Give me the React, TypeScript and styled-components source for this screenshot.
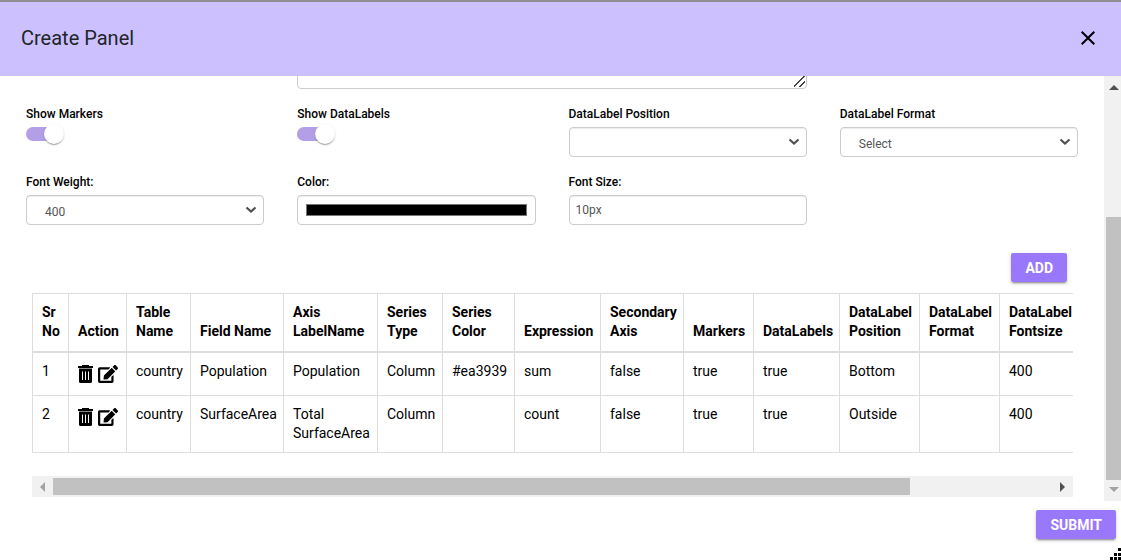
import React, { useState } from "react";
import styled, { createGlobalStyle } from "styled-components";

const GlobalStyle = createGlobalStyle`
  *, *::before, *::after { box-sizing: border-box; }
  body {
    margin: 0;
    background: #fff;
    color: #000;
    font-family: Roboto, "Liberation Sans", sans-serif;
    font-size: 14px;
  }
  button, input, select, textarea { font-family: inherit; }
`;

const Dialog = styled.section`
  border-top: 2px solid #8f8f8f;
`;

const Header = styled.header`
  display: flex;
  align-items: center;
  justify-content: space-between;
  height: 74px;
  padding: 0 21px 2px;
  background: #ccc0ff;
`;

const Title = styled.h1`
  margin: 0;
  font-size: 20px;
  font-weight: 400;
  line-height: 24px;
  color: #212529;
`;

const CloseButton = styled.button`
  display: flex;
  padding: 0;
  border: 0;
  background: none;
  color: #000;
  cursor: pointer;
`;

const Body = styled.div`
  display: flex;
`;

const Content = styled.main`
  flex: 1;
  min-width: 0;
  overflow: hidden;
  padding-bottom: 4px;
`;

const FormGrid = styled.form`
  display: grid;
  grid-template-columns: repeat(4, 1fr);
  gap: 16px 33px;
  margin-top: -47px;
  padding: 0 26px;
`;

const Field = styled.div`
  display: flex;
  flex-direction: column;
  align-items: flex-start;
  gap: 4px;
`;

const Label = styled.label`
  font-size: 12px;
  font-weight: 500;
  line-height: 18px;
`;

const Notes = styled.textarea`
  grid-column: 2 / span 2;
  display: block;
  width: 100%;
  height: 60px;
  border: 1px solid #ccc;
  border-radius: 4px;
  box-shadow: inset 0 1px 1px rgba(0, 0, 0, 0.075);
  resize: both;

  &::-webkit-resizer {
    background: linear-gradient(
        135deg,
        transparent 45%,
        #444 45%,
        #444 54%,
        transparent 54%,
        transparent 71%,
        #444 71%,
        #444 80%,
        transparent 80%
      )
      right 1px bottom 1px / 11px 11px no-repeat;
  }
`;

const Toggle = styled.input`
  appearance: none;
  display: flex;
  align-items: center;
  width: 36px;
  height: 14px;
  margin: 0;
  border-radius: 7px;
  background: #c4c4c4;
  cursor: pointer;

  &::before {
    content: "";
    flex: none;
    width: 20px;
    height: 20px;
    border-radius: 50%;
    background: #fff;
    box-shadow: 0 2px 1px -1px rgba(0, 0, 0, 0.2), 0 1px 1px rgba(0, 0, 0, 0.14),
      0 1px 3px rgba(0, 0, 0, 0.12);
  }

  &:checked { background: #b39fe6; }
  &:checked::before { margin-left: 18px; }
`;

const SelectBox = styled.div`
  display: grid;
  width: 100%;
  align-items: center;

  > * { grid-area: 1 / 1; }
  > svg {
    justify-self: end;
    margin-right: 7px;
    pointer-events: none;
  }
`;

const Select = styled.select`
  appearance: none;
  width: 100%;
  height: 30px;
  padding: 4px 24px 0 18px;
  border: 1px solid #ccc;
  border-radius: 4px;
  background: #fff;
  box-shadow: inset 0 1px 1px rgba(0, 0, 0, 0.075);
  color: #555;
  font-size: 12px;
`;

const TextInput = styled.input`
  width: 100%;
  height: 30px;
  padding: 0 6px;
  border: 1px solid #ccc;
  border-radius: 4px;
  background: #fff;
  box-shadow: inset 0 1px 1px rgba(0, 0, 0, 0.075);
  color: #555;
  font-size: 12px;
`;

const ColorInput = styled(TextInput)`
  padding: 8px;

  &::-webkit-color-swatch-wrapper { padding: 0; }
  &::-webkit-color-swatch {
    border: 1px solid #767676;
    border-radius: 0;
  }
`;

const Actions = styled.div`
  display: flex;
  justify-content: flex-end;
  padding: 28px 37px 11px;
`;

const RaisedButton = styled.button`
  height: 29px;
  padding: 0 14px;
  border: 0;
  border-radius: 2px;
  background: #9a78fb;
  box-shadow: 0 3px 1px -2px rgba(0, 0, 0, 0.2), 0 2px 2px rgba(0, 0, 0, 0.14),
    0 1px 5px rgba(0, 0, 0, 0.12);
  color: #fff;
  font-size: 14px;
  font-weight: 700;
  cursor: pointer;
`;

const TablePane = styled.div`
  margin: 0 31px 0 32px;
`;

const TableViewport = styled.div`
  overflow: hidden;
  padding-bottom: 23px;
`;

const Table = styled.table`
  table-layout: fixed;
  width: 1210px;
  border-top: 1px solid #ddd;
  border-left: 1px solid #ddd;
  border-collapse: separate;
  border-spacing: 0;
  line-height: 19px;
`;

const HeadCell = styled.th`
  padding: 9px 9px 10px;
  border-right: 1px solid #ddd;
  border-bottom: 2px solid #ddd;
  font-weight: 700;
  text-align: left;
  vertical-align: bottom;
`;

const Cell = styled.td`
  padding: 9px;
  border-right: 1px solid #ddd;
  border-bottom: 1px solid #ddd;
  vertical-align: top;
`;

const RowActions = styled.div`
  display: flex;
  align-items: center;
  gap: 5px;
  height: 24px;
`;

const IconButton = styled.button`
  display: flex;
  flex: none;
  padding: 0;
  border: 0;
  background: none;
  color: #000;
  cursor: pointer;
`;

const HorizontalBar = styled.div`
  display: grid;
  grid-template-columns: 21px 857fr 142fr 21px;
  height: 21px;
  background: #f1f1f1;
`;

const VerticalBar = styled.div`
  display: grid;
  grid-template-rows: 21px 120fr 263fr 21px;
  width: 17px;
  background: #f1f1f1;
`;

const HorizontalThumb = styled.div`
  margin: 2px 0;
  background: #c1c1c1;
`;

const VerticalThumb = styled.div`
  grid-row: 3;
  margin-left: 2px;
  background: #c1c1c1;
`;

const BarButton = styled.button<{ $dim?: boolean }>`
  display: flex;
  align-items: center;
  justify-content: center;
  padding: 0;
  border: 0;
  background: none;
  color: ${(p) => (p.$dim ? "#a3a3a3" : "#505050")};
`;

const UpButton = styled(BarButton)`
  padding: 2px 0 0 3px;
`;

const DownButton = styled(BarButton)`
  grid-row: 4;
  padding: 0 0 2px 3px;
`;

const RightButton = styled(BarButton)`
  grid-column: 4;
`;

const Footer = styled.footer`
  display: flex;
  flex-direction: column;
  align-items: flex-end;
  gap: 9px;
  padding-top: 9px;
`;

const SubmitRow = styled.div`
  display: flex;
  padding-right: 5px;
`;

const Grip = styled.svg`
  display: block;
`;

const CloseIcon = () => (
  <svg width="24" height="24" viewBox="0 0 24 24" aria-hidden="true">
    <path
      fill="currentColor"
      d="M19 6.41 17.59 5 12 10.59 6.41 5 5 6.41 10.59 12 5 17.59 6.41 19 12 13.41 17.59 19 19 17.59 13.41 12z"
    />
  </svg>
);

const Chevron = () => (
  <svg width="12" height="8" viewBox="0 0 12 8" aria-hidden="true">
    <path d="M1.500 1.500 6 5.500l4.500-4" fill="none" stroke="#505050" strokeWidth="2.200" />
  </svg>
);

const TrashIcon = () => (
  <svg width="15" height="18" viewBox="0 0 15 18" aria-hidden="true">
    <path
      fill="currentColor"
      fillRule="evenodd"
      d="M4 0h7v1H15v2H0V1h4zM1 4h13v12.500q0 1.500-1.500 1.500H2.500Q1 18 1 16.500zM4 6.500V15H5V6.500zM7 6.500V15H8V6.500zM10 6.500V15H11V6.500z"
    />
    <path fill="#888" d="M1 3h13v1H1z" />
  </svg>
);

const EditIcon = () => (
  <svg width="20" height="18" viewBox="0 0 576 512" aria-hidden="true">
    <path
      fill="currentColor"
      d="M402.600 83.200l90.200 90.200c3.800 3.800 3.800 10 0 13.800L274.400 405.600l-92.800 10.300c-12.400 1.400-22.900-9.100-21.500-21.500l10.300-92.800L388.800 83.200c3.800-3.800 10-3.800 13.800 0zm162-22.900l-48.800-48.800c-15.200-15.200-39.900-15.200-55.200 0l-35.400 35.400c-3.800 3.800-3.800 10 0 13.800l90.200 90.200c3.800 3.800 10 3.800 13.800 0l35.400-35.400c15.200-15.300 15.200-40 0-55.200zM384 346.200V448H64V128h229.800c3.200 0 6.200-1.300 8.500-3.500l40-40c7.600-7.600 2.200-20.500-8.500-20.500H48C21.500 64 0 85.500 0 112v352c0 26.500 21.500 48 48 48h352c26.500 0 48-21.500 48-48V306.200c0-10.700-12.900-16-20.500-8.500l-40 40c-2.200 2.300-3.500 5.300-3.500 8.500z"
    />
  </svg>
);

const arrows = {
  up: "M5 0l5 5H0z",
  down: "M0 0h10L5 5z",
  left: "M5 0v10L0 5z",
  right: "M0 0l5 5-5 5z",
};

const Arrow = ({ dir }: { dir: keyof typeof arrows }) => {
  const tall = dir === "left" || dir === "right";
  return (
    <svg width={tall ? 5 : 10} height={tall ? 10 : 5} aria-hidden="true">
      <path fill="currentColor" d={arrows[dir]} />
    </svg>
  );
};

const columns: { title: string; width: number }[] = [
  { title: "Sr No", width: 36 },
  { title: "Action", width: 58 },
  { title: "Table Name", width: 64 },
  { title: "Field Name", width: 93 },
  { title: "Axis LabelName", width: 94 },
  { title: "Series Type", width: 65 },
  { title: "Series Color", width: 72 },
  { title: "Expression", width: 86 },
  { title: "Secondary Axis", width: 83 },
  { title: "Markers", width: 70 },
  { title: "DataLabels", width: 86 },
  { title: "DataLabel Position", width: 80 },
  { title: "DataLabel Format", width: 80 },
  { title: "DataLabel Fontsize", width: 242 },
];

const series = [
  ["country", "Population", "Population", "Column", "#ea3939", "sum", "false", "true", "true", "Bottom", "", "400"],
  ["country", "SurfaceArea", "Total SurfaceArea", "Column", "", "count", "false", "true", "true", "Outside", "", "400"],
];

const SwitchField = ({ id, label }: { id: string; label: string }) => {
  const [on, setOn] = useState(true);
  return (
    <Field>
      <Label htmlFor={id}>{label}</Label>
      <Toggle id={id} type="checkbox" checked={on} onChange={() => setOn(!on)} />
    </Field>
  );
};

const SelectField = ({ id, label, value }: { id: string; label: string; value: string }) => (
  <Field>
    <Label htmlFor={id}>{label}</Label>
    <SelectBox>
      <Select id={id} defaultValue={value}>
        <option value={value}>{value}</option>
      </Select>
      <Chevron />
    </SelectBox>
  </Field>
);

const gripDots = [
  [9, 0], [5, 5], [9, 5], [1, 9], [5, 9], [9, 9],
];

export default function App() {
  return (
    <>
      <GlobalStyle />
      <Dialog aria-labelledby="dialog-title">
        <Header>
          <Title id="dialog-title">Create Panel</Title>
          <CloseButton type="button" aria-label="Close">
            <CloseIcon />
          </CloseButton>
        </Header>
        <Body>
          <Content>
            <FormGrid>
              <Notes aria-label="Query" />
              <div />
              <SwitchField id="markers" label="Show Markers" />
              <SwitchField id="datalabels" label="Show DataLabels" />
              <SelectField id="position" label="DataLabel Position" value="" />
              <SelectField id="format" label="DataLabel Format" value="Select" />
              <SelectField id="weight" label="Font Weight:" value="400" />
              <Field>
                <Label htmlFor="color">Color:</Label>
                <ColorInput id="color" type="color" defaultValue="#000000" />
              </Field>
              <Field>
                <Label htmlFor="size">Font Size:</Label>
                <TextInput id="size" type="text" defaultValue="10px" />
              </Field>
            </FormGrid>
            <Actions>
              <RaisedButton type="button">ADD</RaisedButton>
            </Actions>
            <TablePane>
              <TableViewport>
                <Table>
                  <colgroup>
                    {columns.map((c) => (
                      <col key={c.title} width={c.width} />
                    ))}
                  </colgroup>
                  <thead>
                    <tr>
                      {columns.map((c) => (
                        <HeadCell key={c.title} scope="col">
                          {c.title === "DataLabel Fontsize" ? (
                            <>DataLabel<br />Fontsize</>
                          ) : (
                            c.title
                          )}
                        </HeadCell>
                      ))}
                    </tr>
                  </thead>
                  <tbody>
                    {series.map((row, r) => (
                      <tr key={r}>
                        <Cell>{r + 1}</Cell>
                        <Cell>
                          <RowActions>
                            <IconButton type="button" aria-label="Delete">
                              <TrashIcon />
                            </IconButton>
                            <IconButton type="button" aria-label="Edit">
                              <EditIcon />
                            </IconButton>
                          </RowActions>
                        </Cell>
                        {row.map((text, i) => (
                          <Cell key={i}>{text}</Cell>
                        ))}
                      </tr>
                    ))}
                  </tbody>
                </Table>
              </TableViewport>
              <HorizontalBar>
                <BarButton type="button" aria-label="Scroll left" $dim>
                  <Arrow dir="left" />
                </BarButton>
                <HorizontalThumb />
                <RightButton type="button" aria-label="Scroll right">
                  <Arrow dir="right" />
                </RightButton>
              </HorizontalBar>
            </TablePane>
          </Content>
          <VerticalBar>
            <UpButton type="button" aria-label="Scroll up">
              <Arrow dir="up" />
            </UpButton>
            <VerticalThumb />
            <DownButton type="button" aria-label="Scroll down" $dim>
              <Arrow dir="down" />
            </DownButton>
          </VerticalBar>
        </Body>
        <Footer>
          <SubmitRow>
            <RaisedButton type="submit">SUBMIT</RaisedButton>
          </SubmitRow>
          <Grip width="12" height="12" aria-hidden="true">
            {gripDots.map(([x, y]) => (
              <rect key={`${x}-${y}`} x={x} y={y} width="3" height="3" fill="#000" />
            ))}
          </Grip>
        </Footer>
      </Dialog>
    </>
  );
}
